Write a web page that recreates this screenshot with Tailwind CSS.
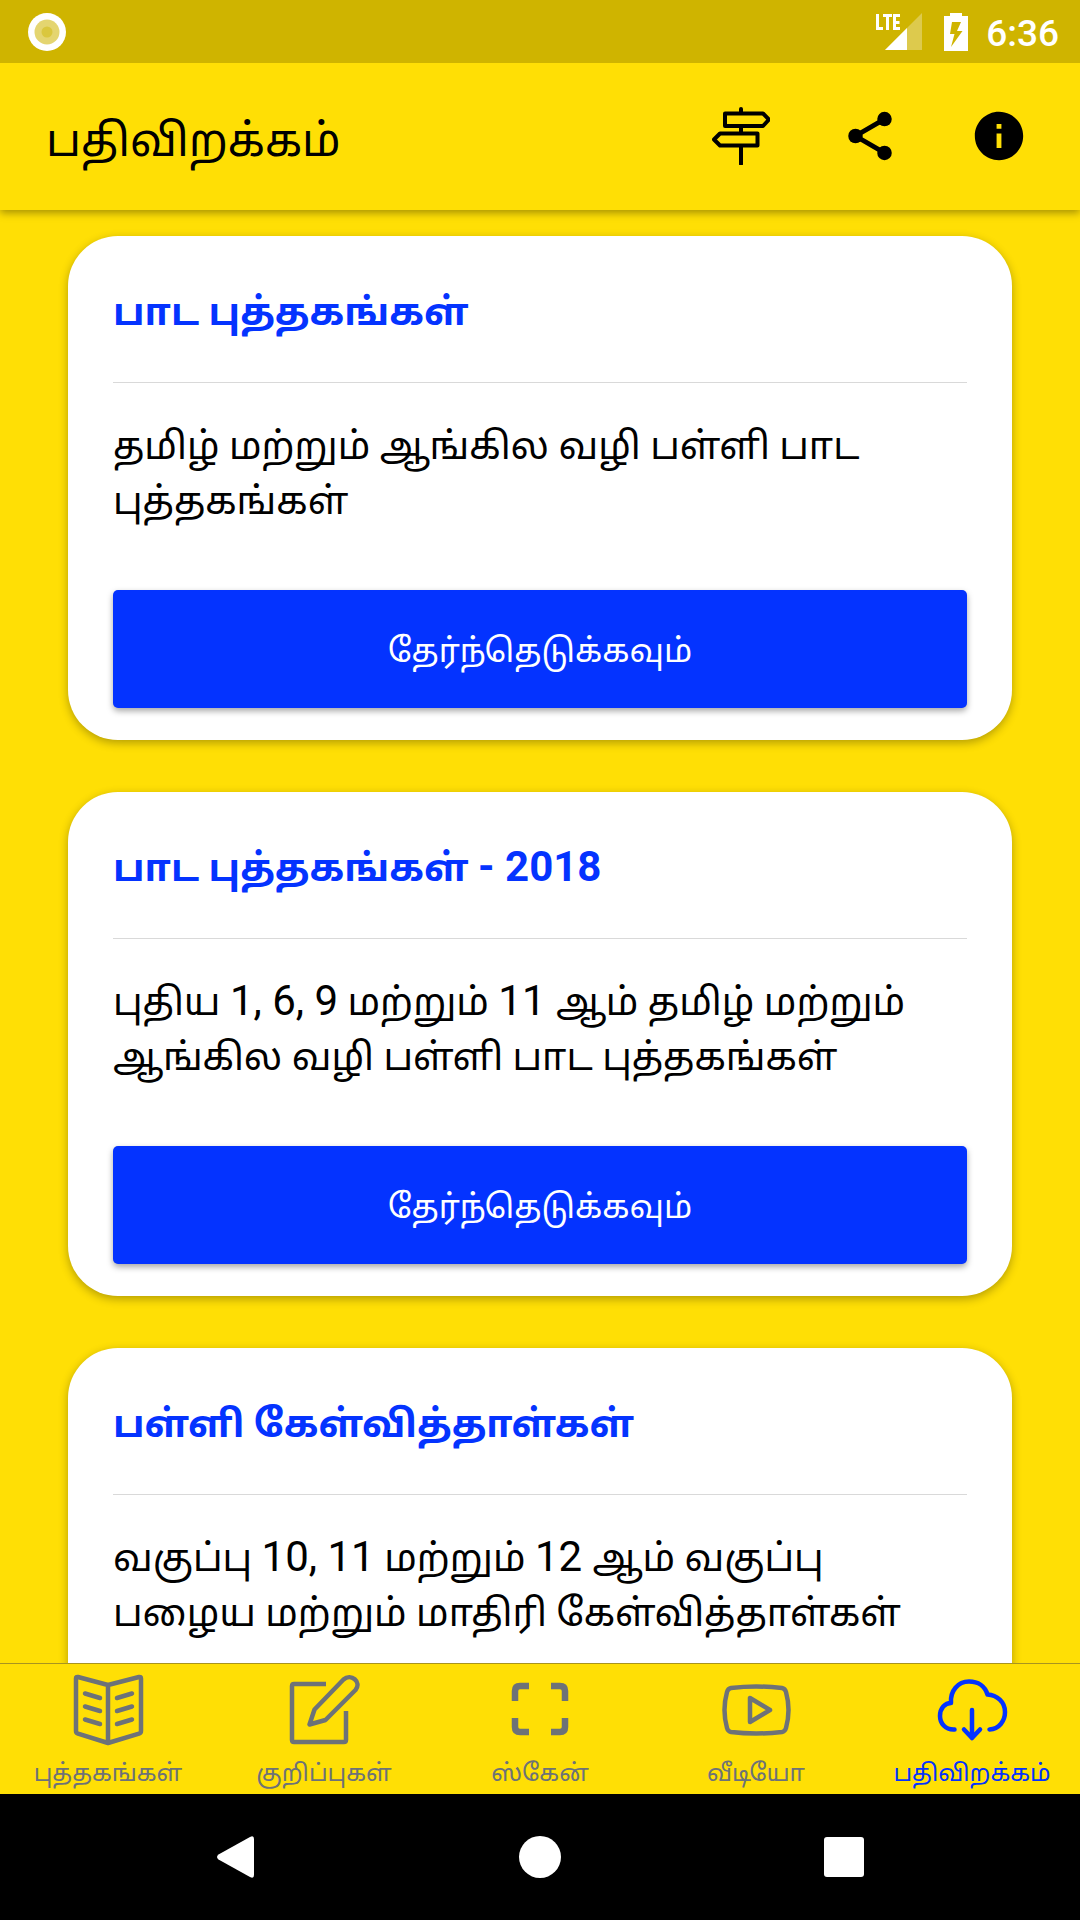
<!DOCTYPE html>
<html lang="ta">
<head>
<meta charset="utf-8">
<meta name="viewport" content="width=device-width, initial-scale=1">
<title>பதிவிறக்கம்</title>
<script src="https://cdn.jsdelivr.net/npm/@tailwindcss/browser@4"></script>
</head>
<body class="flex h-screen flex-col overflow-hidden bg-[#ffdf05] font-[Roboto,'Noto_Sans_Tamil','Noto_Sans',sans-serif] text-black">

<!-- Status bar -->
<div class="relative z-20 flex h-[63px] shrink-0 items-center bg-[#cfb400] pr-[21px] pl-7 text-white">
  <svg class="size-[38px]" viewBox="0 0 38 38"><circle cx="19" cy="19" r="19" fill="#fff"/><circle cx="19" cy="19" r="12.500" fill="#e4d570"/><circle cx="19" cy="19" r="5.500" fill="#dac73e"/></svg>
  <div class="ml-auto flex items-center">
    <svg class="h-[38px] w-[46px]" viewBox="0 0 46 38" fill="#fff"><path d="M46 0V37H9Z" opacity=".3"/><path d="M31 15V37H9Z"/><path d="M0 1h3v13h4v3H0ZM7 1h9v3h-3v13h-3V4H7ZM17 1h7v3h-4v4h3.500v3H20v3h4v3h-7Z"/></svg>
    <svg class="ml-[22px] h-[38px] w-6" viewBox="0 0 24 38" fill="#fff" fill-rule="evenodd"><path d="M0 3H6V0H18V3H24V38H0ZM8 9L6 21H10.500L7 34L18.500 18H13L17 9Z"/></svg>
    <span class="ml-[18px] pt-1 text-[37px] leading-[38px] font-medium">6:36</span>
  </div>
</div>

<!-- App bar -->
<header class="relative z-10 flex h-[147px] shrink-0 items-center bg-[#ffdf05] pr-[52px] pl-[46px] shadow-[0_3px_8px_rgba(0,0,0,0.35)]">
  <h1 class="pt-2 text-[45px] leading-[60px]">பதிவிறக்கம்</h1>
  <div class="ml-auto flex gap-[71px] pb-px">
    <button type="button" aria-label="வழிகாட்டி"><svg class="size-[58px]" viewBox="0 0 58 58" fill="none" stroke="#000" stroke-width="4" stroke-linecap="round" stroke-linejoin="round"><path d="M29 2V6M29 19V26M29 39V57M13 6.500H51L57 12.500L51 19H13ZM45.500 26.500H8L2 32.500L8 38.500H45.500Z"/></svg></button>
    <button type="button" aria-label="பகிர்"><svg class="size-[58px]" viewBox="0 0 24 24"><path d="M18 5L6 12L18 19" fill="none" stroke="#000" stroke-width="2"/><circle cx="18" cy="5" r="3"/><circle cx="6" cy="12" r="3"/><circle cx="18" cy="19" r="3"/></svg></button>
    <button type="button" aria-label="தகவல்"><svg class="size-[58px]" viewBox="0 0 24 24"><path d="M12 2C6.480 2 2 6.480 2 12s4.480 10 10 10 10-4.480 10-10S17.520 2 12 2zm1 15h-2v-6h2v6zm0-8h-2V7h2v2z"/></svg></button>
  </div>
</header>

<!-- Download cards; numerals are set larger than the Tamil letters -->
<main class="flex min-h-0 flex-1 flex-col gap-[52px] overflow-hidden px-[68px] pt-[26px]">
  <section class="shrink-0 rounded-[50px] bg-white px-[45px] pb-8 shadow-[0_3px_10px_rgba(0,0,0,0.3)]">
    <h2 class="border-b border-[#d9d9d9] pt-[48px] pb-[42px] text-[38px] leading-[56px] font-bold text-[#0433ff]">பாட புத்தகங்கள்</h2>
    <p class="pt-[36px] text-[38px] leading-[55px]">தமிழ் மற்றும் ஆங்கில வழி பள்ளி பாட புத்தகங்கள்</p>
    <button type="button" class="mt-[61px] h-[118px] w-full rounded-[5px] bg-[#0433ff] pt-1 text-[33px] text-white shadow-[0_3px_6px_rgba(0,0,0,0.35)]">தேர்ந்தெடுக்கவும்</button>
  </section>
  <section class="shrink-0 rounded-[50px] bg-white px-[45px] pb-8 shadow-[0_3px_10px_rgba(0,0,0,0.3)]">
    <h2 class="border-b border-[#d9d9d9] pt-[48px] pb-[42px] text-[38px] leading-[56px] font-bold text-[#0433ff]">பாட புத்தகங்கள் <span class="text-[42px] leading-none">- 2018</span></h2>
    <p class="pt-[36px] text-[38px] leading-[55px]">புதிய <span class="text-[42px] leading-none">1, 6, 9</span> மற்றும் <span class="text-[42px] leading-none">11 </span>ஆம் தமிழ் மற்றும் ஆங்கில வழி பள்ளி பாட புத்தகங்கள்</p>
    <button type="button" class="mt-[61px] h-[118px] w-full rounded-[5px] bg-[#0433ff] pt-1 text-[33px] text-white shadow-[0_3px_6px_rgba(0,0,0,0.35)]">தேர்ந்தெடுக்கவும்</button>
  </section>
  <section class="shrink-0 rounded-[50px] bg-white px-[45px] pb-48 shadow-[0_3px_10px_rgba(0,0,0,0.3)]">
    <h2 class="border-b border-[#d9d9d9] pt-[48px] pb-[42px] text-[38px] leading-[56px] font-bold text-[#0433ff]">பள்ளி கேள்வித்தாள்கள்</h2>
    <p class="pt-[36px] text-[38px] leading-[55px]">வகுப்பு <span class="text-[42px] leading-none">10, 11</span> மற்றும் <span class="text-[42px] leading-none">12 </span>ஆம் வகுப்பு பழைய மற்றும் மாதிரி கேள்வித்தாள்கள்</p>
  </section>
</main>

<!-- Tab bar -->
<nav class="relative z-10 grid h-[131px] shrink-0 grid-cols-5 border-t border-[#a89420] bg-[#ffdf05] text-[24px] leading-[36px] text-[#6d7278]">
  <a href="#" class="flex flex-col items-center gap-[9px] pt-[10px]">
    <svg class="size-[72px] shrink-0" viewBox="0 0 72 72" fill="none" stroke="currentColor" stroke-width="4.500" stroke-linecap="round" stroke-linejoin="round"><path d="M36 11L6 3Q4 2.500 4 4.500V57Q4 59 6 59.700L36 69L67 59.700Q69 59 69 57V4.500Q69 2.500 67 3ZM36 11V69"/><path d="M13 19.500L28 24M13 32.500L28 37M13 45.500L28 50M60 19.500L45 24M60 32.500L45 37M60 45.500L45 50"/></svg>
    <span>புத்தகங்கள்</span>
  </a>
  <a href="#" class="flex flex-col items-center gap-[9px] pt-[10px]">
    <svg class="size-[72px] shrink-0" viewBox="0 0 72 72" fill="none" stroke="currentColor" stroke-width="4.500" stroke-linejoin="round"><path d="M38 10H6Q4 10 4 12V66Q4 68 6 68H56Q58 68 58 66V37"/><path d="M21.500 50.500L26.500 35.500L55.500 5.500C63 -1 74 8 67.500 16L37.500 46Z"/></svg>
    <span>குறிப்புகள்</span>
  </a>
  <a href="#" class="flex flex-col items-center gap-[9px] pt-[10px]">
    <svg class="size-[72px] shrink-0" viewBox="0 0 72 72" fill="none" stroke="currentColor" stroke-width="6.500"><path d="M25 12H16Q11 12 11 17V27M47 12H56Q61 12 61 17V27M11 44V53Q11 58 16 58H25M61 44V53Q61 58 56 58H47"/></svg>
    <span>ஸ்கேன்</span>
  </a>
  <a href="#" class="flex flex-col items-center gap-[9px] pt-[10px]">
    <svg class="size-[72px] shrink-0" viewBox="0 0 72 72" fill="none" stroke="currentColor" stroke-width="4.500" stroke-linejoin="round"><path d="M11 14Q36 11 62 14Q65 14.500 66 18Q71 36 66 54Q65 57.500 62 58Q36 61 11 58Q8 57.500 7 54Q2 36 7 18Q8 14.500 11 14Z"/><path d="M30 24V48L50 36Z"/></svg>
    <span>வீடியோ</span>
  </a>
  <a href="#" aria-current="page" class="flex flex-col items-center gap-[9px] pt-[10px] text-[#0433ff]">
    <svg class="size-[72px] shrink-0" viewBox="0 0 72 72" fill="none" stroke="currentColor" stroke-width="4.500" stroke-linecap="round" stroke-linejoin="round"><path d="M18.500 55.500C9 56 4 49 4 42C4 34 9 29 15 29C14 17 22 7.500 33 7.500C42 7.500 49 12 51.500 20.500C61 21 69 28 69 38C69 47 63 55 53.500 55.500"/><path d="M36 36V64M28 55.500L36 64L44 55.500"/></svg>
    <span>பதிவிறக்கம்</span>
  </a>
</nav>

<!-- System navigation -->
<div class="grid h-[126px] shrink-0 grid-cols-3 place-items-center bg-black px-[84px]">
  <button type="button" aria-label="Back"><svg class="size-[42px]" viewBox="0 0 42 42" fill="#fff"><path d="M3.500 18.500L35 1Q39 -1 39 3V39Q39 43 35 41L3.500 23.500Q.500 21 3.500 18.500Z"/></svg></button>
  <button type="button" aria-label="Home"><svg class="size-[42px]" viewBox="0 0 42 42" fill="#fff"><circle cx="21" cy="21" r="21"/></svg></button>
  <button type="button" aria-label="Overview"><svg class="size-[42px]" viewBox="0 0 42 42" fill="#fff"><rect x="1" y="1" width="40" height="40" rx="3"/></svg></button>
</div>
</body>
</html>
